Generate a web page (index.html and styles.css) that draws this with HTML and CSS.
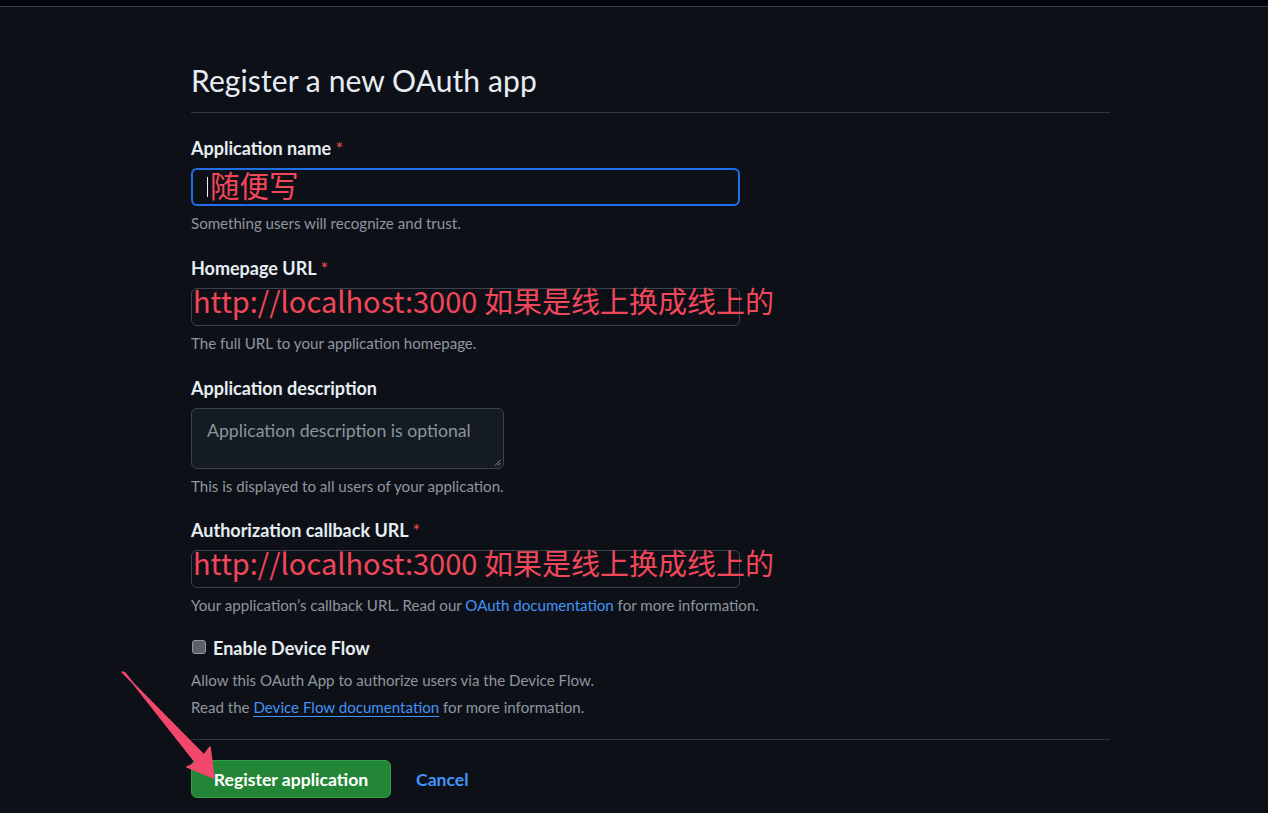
FILE: index.html
```html
<!DOCTYPE html>
<html lang="zh-CN">
<head>
<meta charset="utf-8">
<title>Register a new OAuth app</title>
<link rel="stylesheet" href="styles.css">
</head>
<body>
<div class="topbar"></div>
<main class="page">
  <h1 class="title">Register a new OAuth app</h1>
  <form class="form">
    <div class="field">
      <div class="label">Application name <span class="req">*</span></div>
      <div class="input focused"><span class="caret"></span><span class="note note-sm">随便写</span></div>
      <div class="hint">Something users will recognize and trust.</div>
    </div>
    <div class="field">
      <div class="label">Homepage URL <span class="req">*</span></div>
      <div class="input"><span class="note">http://localhost:3000 如果是线上换成线上的</span></div>
      <div class="hint">The full URL to your application homepage.</div>
    </div>
    <div class="field">
      <div class="label">Application description</div>
      <div class="textarea"><span class="placeholder">Application description is optional</span>
        <svg class="grip" width="7" height="7" viewBox="0 0 7 7"><path d="M6.5 1 L1 6.5 M6.5 4 L4 6.5" stroke="#8b949e" stroke-width="1"/></svg>
      </div>
      <div class="hint">This is displayed to all users of your application.</div>
    </div>
    <div class="field field-callback">
      <div class="label">Authorization callback URL <span class="req">*</span></div>
      <div class="input"><span class="note">http://localhost:3000 如果是线上换成线上的</span></div>
      <div class="hint">Your application’s callback URL. Read our <a class="link">OAuth documentation</a> for more information.</div>
    </div>
    <div class="field check-field">
      <div class="check-row"><span class="checkbox"></span><span class="label">Enable Device Flow</span></div>
      <div class="hint hint-gap">Allow this OAuth App to authorize users via the Device Flow.</div>
      <div class="hint">Read the <a class="link underline">Device Flow documentation</a> for more information.</div>
    </div>
    <div class="actions">
      <button type="button" class="btn-primary">Register application</button>
      <a class="cancel">Cancel</a>
    </div>
  </form>
</main>
<svg class="arrow" width="120" height="130" viewBox="0 0 120 130">
  <path d="M12 12 L15 13 L86 103 L77 107 L104 118 L100 87 L94 95 Z" fill="#f0476b" stroke="#f0476b" stroke-width="1.5" stroke-linejoin="round"/>
</svg>
</body>
</html>
```
FILE: styles.css
```css
html, body {
  margin: 0;
  padding: 0;
  background: #0d1117;
}
body {
  font-family: "Lato", "Noto Sans", "Liberation Sans", sans-serif;
  color: #e6edf3;
  height: 813px;
  overflow: hidden;
  position: relative;
}
.topbar {
  height: 6px;
  background: #03040b;
  border-bottom: 1px solid #3a3f47;
}
.page {
  margin-left: 191px;
  width: 919px;
}
.title {
  margin: 0;
  padding-top: 58px;
  padding-bottom: 17px;
  font-size: 30px;
  line-height: 30px;
  font-weight: 400;
  border-bottom: 1px solid #30363d;
  letter-spacing: 0.1px;
}
.form {
  display: flex;
  flex-direction: column;
}
.field {
  display: flex;
  flex-direction: column;
  align-items: flex-start;
}
.field:first-child { margin-top: 25px; }
.field + .field { margin-top: 26px; }
.field.field-callback { margin-top: 25px; }
.label {
  font-size: 18px;
  line-height: 20px;
  font-weight: 700;
  color: #e6edf3;
}
.req { color: #f85149; font-weight: 400; }
.input {
  margin-top: 10px;
  box-sizing: border-box;
  width: 549px;
  height: 38px;
  border: 1px solid #3d444d;
  border-radius: 6px;
  background: #0d1117;
  display: flex;
  align-items: center;
  position: relative;
  overflow: visible;
  white-space: nowrap;
}
.input.focused {
  border: 2px solid #1f6feb;
  height: 38px;
}
.caret {
  width: 1px;
  height: 20px;
  background: #e6edf3;
  margin-left: 14px;
  margin-right: 2px;
}
.note {
  font-family: "Noto Sans CJK SC", "Noto Sans", sans-serif;
  color: #f2465a;
  font-size: 29px;
  line-height: 38px;
  margin-left: 1px;
  margin-top: -14px;
  letter-spacing: 0;
}
.note-sm { margin-left: 0; margin-top: -6px; font-size: 29.5px; }
.textarea {
  margin-top: 10px;
  box-sizing: border-box;
  width: 313px;
  height: 61px;
  border: 1px solid #3d444d;
  border-radius: 6px;
  background: #151b23;
  position: relative;
  padding: 12px 15px;
}
.placeholder {
  font-size: 17.7px;
  line-height: 24px;
  color: #8b949e;
  display: block;
  margin-top: -2px;
}
.grip { position: absolute; right: 2px; bottom: 2px; }
.hint {
  margin-top: 8px;
  font-size: 15.1px;
  line-height: 18px;
  color: #8d96a0;
}
.link { color: #4493f8; text-decoration: none; }
.link.underline { border-bottom: 1px solid #4493f8; }
.check-row {
  display: flex;
  align-items: center;
  gap: 7px;
}
.checkbox {
  box-sizing: border-box;
  width: 14px;
  height: 14px;
  border-radius: 3px;
  background: #5c6169;
  border: 1px solid #9198a1;
  margin-left: 1px;
  margin-top: -3px;
}
.field.check-field { margin-top: 24px; }
.check-field .hint-gap { margin-top: 13px; }
.check-field .hint + .hint { margin-top: 9px; }
.actions {
  margin-top: 23px;
  border-top: 1px solid #30363d;
  padding-top: 20px;
  display: flex;
  align-items: center;
  gap: 25px;
}
.btn-primary {
  box-sizing: border-box;
  height: 38px;
  width: 200px;
  border-radius: 6px;
  border: 1px solid #2ea043;
  background: #238636;
  color: #ffffff;
  font-family: "Lato", "Noto Sans", sans-serif;
  font-size: 17.6px;
  font-weight: 700;
  padding: 0;
}
.cancel {
  color: #4493f8;
  font-size: 17.6px;
  font-weight: 700;
}
.arrow {
  position: absolute;
  left: 110px;
  top: 660px;
}
```
